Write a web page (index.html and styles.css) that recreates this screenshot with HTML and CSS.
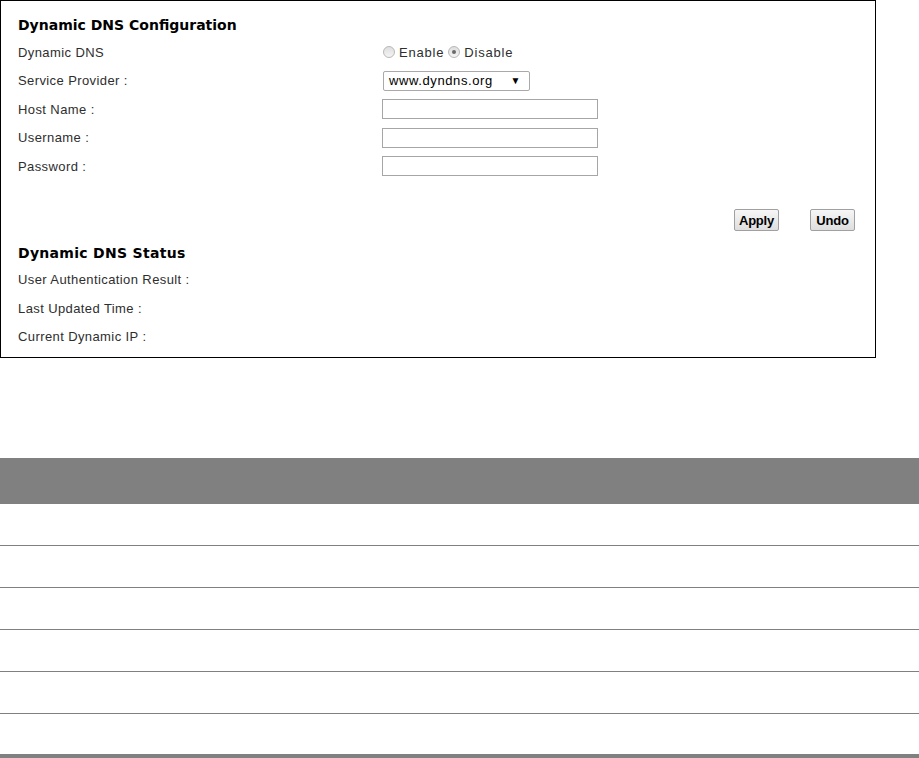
FILE: index.html
```html
<!DOCTYPE html>
<html>
<head>
<meta charset="utf-8">
<title>Dynamic DNS</title>
<link rel="stylesheet" href="styles.css">
</head>
<body>
<div class="panel">
  <div class="heading">Dynamic DNS Configuration</div>
  <div class="row">
    <div class="label">Dynamic DNS</div>
    <div class="control radios">
      <span class="radio"></span><span class="rlabel">Enable</span>
      <span class="radio checked"></span><span class="rlabel">Disable</span>
    </div>
  </div>
  <div class="row">
    <div class="label">Service Provider :</div>
    <div class="control">
      <div class="select"><span>www.dyndns.org</span><span class="arrow">&#9660;</span></div>
    </div>
  </div>
  <div class="row">
    <div class="label">Host Name :</div>
    <div class="control"><input class="text" type="text"></div>
  </div>
  <div class="row">
    <div class="label">Username :</div>
    <div class="control"><input class="text" type="text"></div>
  </div>
  <div class="row">
    <div class="label">Password :</div>
    <div class="control"><input class="text" type="password"></div>
  </div>
  <div class="buttons">
    <button class="btn">Apply</button>
    <button class="btn">Undo</button>
  </div>
  <div class="heading heading2">Dynamic DNS Status</div>
  <div class="row"><div class="label">User Authentication Result :</div></div>
  <div class="row"><div class="label">Last Updated Time :</div></div>
  <div class="row"><div class="label">Current Dynamic IP :</div></div>
</div>

<div class="table">
  <div class="thead"></div>
  <div class="trow"></div>
  <div class="trow"></div>
  <div class="trow"></div>
  <div class="trow"></div>
  <div class="trow"></div>
  <div class="trow last"></div>
</div>
</body>
</html>
```
FILE: styles.css
```css
html, body {
  margin: 0;
  padding: 0;
  background: #fff;
}
body {
  font-family: "Liberation Sans", Arial, sans-serif;
  font-size: 13px;
  letter-spacing: 0.4px;
  color: #2e2e2e;
  width: 919px;
  height: 758px;
  overflow: hidden;
}
.panel {
  width: 876px;
  border: 1px solid #000;
  padding: 12px 20px 6px 17px;
  box-sizing: border-box;
  display: flex;
  flex-direction: column;
}
.heading {
  height: 25px;
  line-height: 25px;
  font-family: "DejaVu Sans", Verdana, sans-serif;
  font-size: 14px;
  letter-spacing: 0;
  font-weight: bold;
  color: #000;
}
.heading2 {
  margin-top: 9.5px;
  letter-spacing: 0.3px;
}
.row {
  height: 28.5px;
  display: flex;
  align-items: center;
}
.label {
  width: 364px;
  flex: none;
}
.control {
  display: flex;
  align-items: center;
}
.radios {
  padding-left: 1px;
}
.radio {
  width: 10px;
  height: 10px;
  border-radius: 50%;
  border: 1px solid #b8b8b8;
  background: linear-gradient(#dedede, #f4f4f4);
  display: inline-block;
  position: relative;
  box-sizing: content-box;
}
.radio.checked::after {
  content: "";
  position: absolute;
  left: 3px;
  top: 3px;
  width: 4px;
  height: 4px;
  border-radius: 50%;
  background: #6a6a6a;
}
.rlabel {
  margin-left: 4px;
  margin-right: 4px;
  letter-spacing: 0.8px;
}
.select {
  margin-left: 1px;
  width: 147px;
  height: 20px;
  box-sizing: border-box;
  border: 1px solid #a9a9a9;
  border-radius: 2px;
  background: #fff;
  display: flex;
  align-items: center;
  justify-content: space-between;
  padding: 0 8px 0 5px;
  color: #000;
  letter-spacing: 0.6px;
}
.arrow {
  font-size: 10px;
  color: #000;
}
.text {
  width: 216px;
  height: 20px;
  box-sizing: border-box;
  border: 1px solid #a6a6a6;
  margin: 0;
  padding: 0 2px;
  background: #fff;
}
.buttons {
  margin-top: 28.5px;
  height: 22px;
  display: flex;
  justify-content: flex-end;
  gap: 31px;
}
.btn {
  width: 45px;
  height: 22px;
  margin: 0;
  padding: 0;
  box-sizing: border-box;
  border: 1px solid #a0a0a0;
  border-radius: 2px;
  background: linear-gradient(#f6f6f6, #dedede);
  font-family: "Liberation Sans", Arial, sans-serif;
  font-size: 13px;
  font-weight: bold;
  color: #000;
  letter-spacing: -0.2px;
}
.table {
  margin-top: 100px;
  width: 919px;
}
.thead {
  height: 46px;
  background: #808080;
}
.trow {
  height: 41px;
  border-bottom: 1px solid #808080;
}
.trow.last {
  height: 40px;
  border-bottom: 4px solid #808080;
}
```
